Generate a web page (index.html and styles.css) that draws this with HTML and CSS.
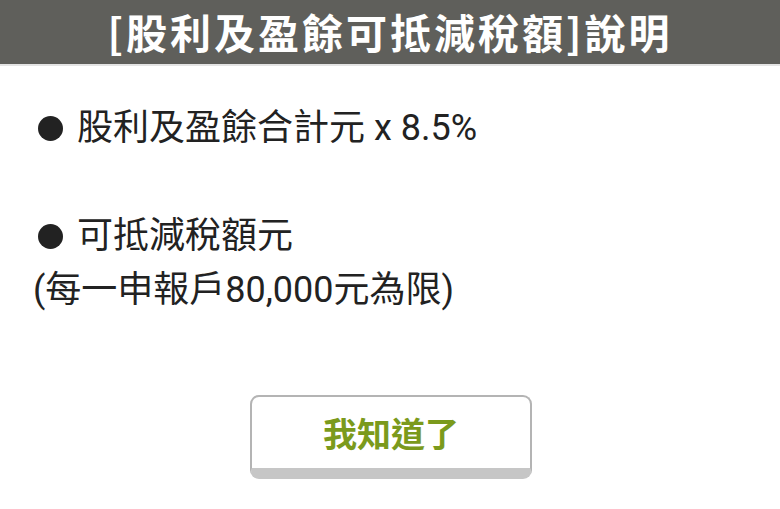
FILE: index.html
```html
<!DOCTYPE html>
<html lang="zh-Hant">
<head>
<meta charset="utf-8">
<link rel="stylesheet" href="styles.css">
</head>
<body>
<div class="page">
  <header class="title-bar"><span class="title-text">[股利及盈餘可抵減稅額]說明</span></header>
  <main class="content">
    <div class="line bullet-line"><span class="dot"></span><span>股利及盈餘合計元 x 8.5%</span></div>
    <div class="line empty"></div>
    <div class="line bullet-line"><span class="dot"></span><span>可抵減稅額元</span></div>
    <div class="line note">(每一申報戶80,000元為限)</div>
  </main>
  <div class="actions">
    <button class="ok-btn">我知道了</button>
  </div>
</div>
</body>
</html>
```
FILE: styles.css
```css
html, body {
  margin: 0;
  padding: 0;
  background: #ffffff;
}
.page {
  width: 780px;
  height: 509px;
  font-family: Roboto, "Noto Sans CJK TC", sans-serif;
  color: #222222;
}
.title-bar {
  height: 66px;
  box-sizing: border-box;
  background: #5f5f5b;
  border-bottom: 2px solid #e4e4e4;
  display: flex;
  justify-content: center;
  align-items: flex-start;
  padding-top: 1px;
}
.title-text {
  color: #ffffff;
  font-family: "Noto Sans CJK TC", sans-serif;
  font-weight: bold;
  font-size: 41px;
  line-height: normal;
  letter-spacing: 3px;
  white-space: nowrap;
}
.content {
  padding: 35px 0 0 33px;
  font-size: 36px;
}
.line {
  height: 54px;
  line-height: 54px;
  white-space: nowrap;
}
.bullet-line {
  display: flex;
  align-items: center;
  gap: 14px;
  padding-left: 5px;
}
.dot {
  width: 25px;
  height: 25px;
  border-radius: 50%;
  background: #222222;
  flex: none;
}
.actions {
  display: flex;
  justify-content: center;
  padding-top: 78px;
}
.ok-btn {
  width: 282px;
  height: 84px;
  box-sizing: border-box;
  background: #ffffff;
  border: 2px solid #b4b4b4;
  border-bottom: 11px solid #c6c6c6;
  border-radius: 9px;
  color: #7b9a1c;
  font-family: "Noto Sans CJK TC", sans-serif;
  font-weight: bold;
  font-size: 34px;
  line-height: 40px;
  padding: 0;
  margin-left: 2px;
}
```
